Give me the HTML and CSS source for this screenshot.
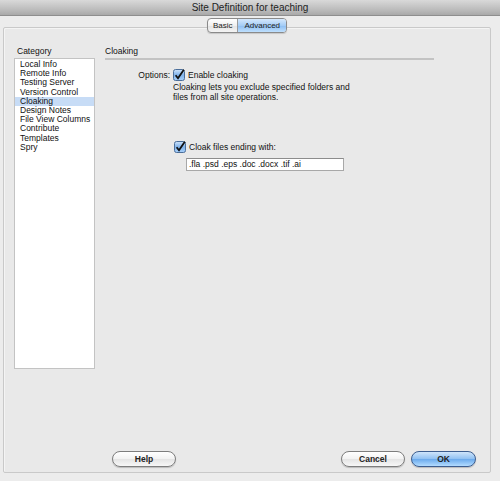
FILE: index.html
```html
<!DOCTYPE html>
<html>
<head>
<meta charset="utf-8">
<link rel="stylesheet" href="styles.css">
</head>
<body>
<div class="window">
  <div class="titlebar">Site Definition for teaching</div>
  <div class="main">
    <div class="tabs">
      <span class="tab">Basic</span><span class="tab tab-on">Advanced</span>
    </div>
    <div class="box">
      <div class="content">
        <div class="left">
          <div class="cat-label">Category</div>
          <ul class="list">
            <li>Local Info</li>
            <li>Remote Info</li>
            <li>Testing Server</li>
            <li>Version Control</li>
            <li class="sel">Cloaking</li>
            <li>Design Notes</li>
            <li>File View Columns</li>
            <li>Contribute</li>
            <li>Templates</li>
            <li>Spry</li>
          </ul>
        </div>
        <div class="right">
          <div class="section-title">Cloaking</div>
          <div class="rule"></div>
          <div class="opt-row">
            <span class="opt-label">Options:</span>
            <div class="opt-body">
              <label class="check"><svg class="cb" viewBox="0 0 12 12"><defs><linearGradient id="g1" x1="0" y1="0" x2="0" y2="1"><stop offset="0" stop-color="#cfe4fb"/><stop offset="0.5" stop-color="#7fb2ea"/><stop offset="1" stop-color="#a9d1fb"/></linearGradient></defs><rect x="0.5" y="0.5" width="11" height="11" rx="2" fill="url(#g1)" stroke="#4b6e9a"/><path d="M2.6 6.2 L5 9.2 L10.8 0.8" fill="none" stroke="#111" stroke-width="1.8"/></svg><span>Enable cloaking</span></label>
              <p class="desc">Cloaking lets you exclude specified folders and<br>files from all site operations.</p>
            </div>
          </div>
          <div class="cloak">
            <label class="check"><svg class="cb" viewBox="0 0 12 12"><defs><linearGradient id="g2" x1="0" y1="0" x2="0" y2="1"><stop offset="0" stop-color="#cfe4fb"/><stop offset="0.5" stop-color="#7fb2ea"/><stop offset="1" stop-color="#a9d1fb"/></linearGradient></defs><rect x="0.5" y="0.5" width="11" height="11" rx="2" fill="url(#g2)" stroke="#4b6e9a"/><path d="M2.6 6.2 L5 9.2 L10.8 0.8" fill="none" stroke="#111" stroke-width="1.8"/></svg><span>Cloak files ending with:</span></label>
            <div class="field">.fla .psd .eps .doc .docx .tif .ai</div>
          </div>
        </div>
      </div>
      <div class="buttons">
        <span class="btn">Help</span>
        <span class="spacer"></span>
        <span class="btn">Cancel</span>
        <span class="btn btn-ok">OK</span>
      </div>
    </div>
  </div>
</div>
</body>
</html>
```

FILE: styles.css
```css
html, body {
  margin: 0;
  padding: 0;
}
body {
  width: 500px;
  height: 481px;
  background: #ececec;
  font-family: "Liberation Sans", Arial, sans-serif;
  font-size: 8.5px;
  color: #111;
  overflow: hidden;
}
.window {
  display: flex;
  flex-direction: column;
  height: 481px;
}
.titlebar {
  height: 15px;
  line-height: 16px;
  text-align: center;
  font-size: 10px;
  color: #1e1e1e;
  background: linear-gradient(#d9d9d9, #b9b9b9 70%, #a9a9a9);
  border-bottom: 1px solid #8e8e8e;
}
.main {
  flex: 1;
  display: flex;
  flex-direction: column;
  padding: 2px 9px 8px 3px;
}
.tabs {
  position: relative;
  z-index: 1;
  align-self: center;
  display: flex;
  margin: 0 0 -6px 0;
  height: 13px;
  border: 1px solid #8a8a8a;
  border-radius: 4px;
  overflow: hidden;
  background: linear-gradient(#ffffff, #f0f0f0 50%, #e2e2e2 51%, #f4f4f4);
  box-shadow: 0 1px 1px rgba(0,0,0,0.15);
}
.tab {
  line-height: 13px;
  padding: 0 5px;
  font-size: 8px;
  color: #222;
}
.tab + .tab {
  border-left: 1px solid #9a9a9a;
}
.tab-on {
  padding: 0 6px;
  background: linear-gradient(#d5e8fc, #a5cdf6 50%, #8cbdf2 51%, #bfe0fd);
}
.box {
  flex: 1;
  display: flex;
  flex-direction: column;
  border: 1px solid #c9c9c9;
  border-radius: 2px;
  background: #e9e9e9;
  box-shadow: inset 1px 1px 0 #f4f4f4;
}
.content {
  flex: 1;
  display: flex;
  padding: 18px 0 0 10px;
}
.left {
  width: 81px;
  display: flex;
  flex-direction: column;
}
.cat-label {
  line-height: 10px;
  padding-left: 3px;
  margin-bottom: 2px;
}
.list {
  margin: 0;
  padding: 1px 0 0 0;
  list-style: none;
  height: 308px;
  background: #ffffff;
  border: 1px solid #c3c3c3;
}
.list li {
  line-height: 9.2px;
  padding-left: 5px;
  white-space: nowrap;
}
.list li.sel {
  background: #c7dcf6;
}
.right {
  width: 329px;
  margin-left: 10px;
  display: flex;
  flex-direction: column;
}
.section-title {
  line-height: 10px;
}
.rule {
  height: 2px;
  background: #c3c3c3;
  margin-top: 2px;
}
.opt-row {
  display: flex;
  margin-top: 9px;
}
.opt-label {
  width: 65px;
  text-align: right;
  padding-right: 3px;
  line-height: 12px;
}
.opt-body {
  display: flex;
  flex-direction: column;
}
.check {
  display: flex;
  align-items: center;
  gap: 3px;
  line-height: 12px;
}
.cb {
  width: 12px;
  height: 12px;
  display: block;
}
.desc {
  margin: 2px 0 0 0;
  line-height: 9.5px;
}
.cloak {
  margin: 39px 0 0 69px;
  display: flex;
  flex-direction: column;
}
.field {
  margin: 5px 0 0 12px;
  width: 154px;
  height: 11px;
  line-height: 11px;
  padding-left: 2px;
  background: #fff;
  border: 1px solid #a8a8a8;
  border-top-color: #8c8c8c;
  white-space: nowrap;
}
.buttons {
  display: flex;
  align-items: center;
  padding: 0 14px 5px 108px;
}
.spacer {
  flex: 1;
}
.btn {
  width: 62px;
  height: 14px;
  line-height: 14px;
  text-align: center;
  font-size: 8.5px;
  font-weight: bold;
  color: #222;
  border: 1px solid #7d7d7d;
  border-radius: 8px;
  background: linear-gradient(#ffffff, #f2f2f2 50%, #e4e4e4 51%, #f7f7f7);
  box-shadow: 0 1px 1px rgba(0,0,0,0.2);
}
.btn + .btn {
  margin-left: 6px;
}
.btn-ok {
  width: 63px;
  border-color: #3c5d8f;
  background: linear-gradient(#cfe5fb, #8fc0f2 50%, #6aa9ec 51%, #b3dcff);
}
```
